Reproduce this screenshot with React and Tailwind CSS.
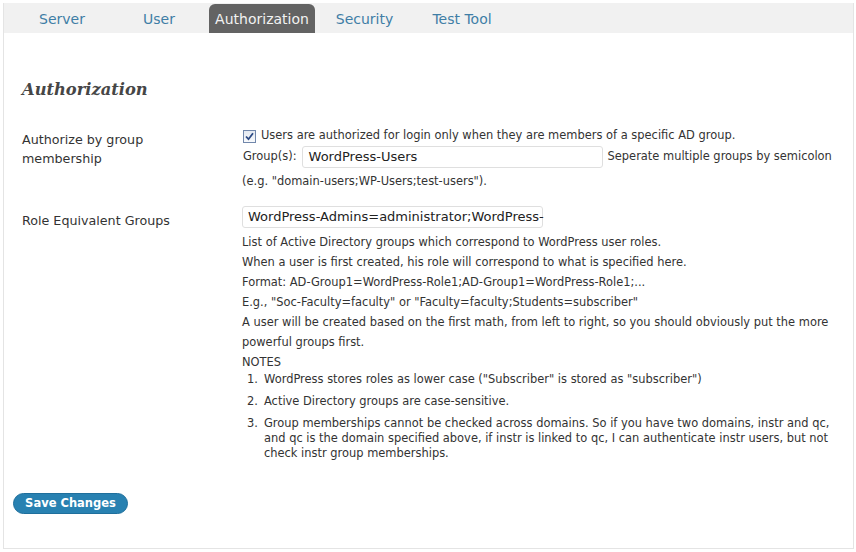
export default function App() {
  const notes = [
    <>WordPress stores roles as lower case ("Subscriber" is stored as "subscriber")</>,
    <>Active Directory groups are case-sensitive.</>,
    <>
      Group memberships cannot be checked across domains. So if you have two domains, instr and qc,
      <br />
      and qc is the domain specified above, if instr is linked to qc, I can authenticate instr users, but not
      <br />
      check instr group memberships.
    </>,
  ];
  return (
    <div className="w-[856px] h-[552px] bg-white pt-[3px] pl-[3px] font-['DejaVu_Sans',sans-serif] text-[#333]">
      <div className="w-[851px] h-[546px] border-l border-r border-b border-[#e4e4e4] flex flex-col">
        {/* Tabs */}
        <div className="h-[30px] bg-[#f1f1f1] flex items-end text-[14px] text-[#3f7ea6] whitespace-nowrap">
          <div className="ml-[29px] w-[58px] h-[29px] pt-[2px] flex items-center justify-center">Server</div>
          <div className="ml-[46px] w-[44px] h-[29px] pt-[2px] flex items-center justify-center">User</div>
          <div className="ml-[28px] w-[106px] h-[29px] pt-[2px] flex items-center justify-center bg-[#636363] text-[#f2f2f2] rounded-t-[6px]">
            Authorization
          </div>
          <div className="ml-[15px] w-[69px] h-[29px] pt-[2px] flex items-center justify-center">Security</div>
          <div className="ml-[24px] w-[78px] h-[29px] pt-[2px] flex items-center justify-center">Test Tool</div>
        </div>

        {/* Heading */}
        <h2 className="mt-[47px] ml-[18px] h-[20px] leading-[20px] font-['DejaVu_Serif',serif] italic font-bold text-[16.3px] text-[#464646]">
          Authorization
        </h2>

        {/* Row 1 */}
        <div className="mt-[25px] ml-[18px] flex items-start">
          <div className="w-[220px] mt-[5px] text-[12.7px] leading-[19px] pr-[40px]">
            Authorize by group membership
          </div>
          <div className="flex flex-col text-[11.45px] whitespace-nowrap">
            <div className="mt-[1px] h-[20px] flex items-center">
              <span className="ml-[1px] w-[13px] h-[13px] border border-[#7187ab] bg-gradient-to-b from-[#e4e9f1] to-[#f8fafc] flex items-center justify-center">
                <svg width="9" height="9" viewBox="0 0 9 9">
                  <path d="M1 4.5 L3.5 7.2 L8 1.2" fill="none" stroke="#2c4a84" strokeWidth="1.8" />
                </svg>
              </span>
              <span className="ml-[5px]">
                Users are authorized for login only when they are members of a specific AD group.
              </span>
            </div>
            <div className="h-[22px] flex items-center">
              <span className="ml-[1px]">Group(s):</span>
              <div className="ml-[5px] w-[301px] h-[22px] border border-[#dfdfdf] rounded-[3px] bg-white flex items-center pl-[6px] text-[13px] text-[#222]">
                WordPress-Users
              </div>
              <span className="ml-[5px]">Seperate multiple groups by semicolon</span>
            </div>
            <div className="mt-[3px] leading-[20px]">(e.g. "domain-users;WP-Users;test-users").</div>
          </div>
        </div>

        {/* Row 2 */}
        <div className="mt-[15px] ml-[18px] flex items-start">
          <div className="w-[220px] mt-[5px] text-[12.7px] leading-[19px]">Role Equivalent Groups</div>
          <div className="flex flex-col text-[11.45px] whitespace-nowrap">
            <div className="w-[301px] h-[22px] border border-[#dfdfdf] rounded-[3px] bg-white flex items-center pl-[5px] text-[13px] text-[#222]">
              WordPress-Admins=administrator;WordPress-
            </div>
            <div className="mt-[4px] leading-[20px]">
              <div>List of Active Directory groups which correspond to WordPress user roles.</div>
              <div>When a user is first created, his role will correspond to what is specified here.</div>
              <div>Format: AD-Group1=WordPress-Role1;AD-Group1=WordPress-Role1;...</div>
              <div>E.g., "Soc-Faculty=faculty" or "Faculty=faculty;Students=subscriber"</div>
              <div>
                A user will be created based on the first math, from left to right, so you should obviously put the more
                <br />
                powerful groups first.
              </div>
              <div>NOTES</div>
            </div>
            <ol className="leading-[15px]">
              {notes.map((n, i) => (
                <li key={i} className="flex mb-[7px]">
                  <span className="w-[16px] text-right shrink-0">{i + 1}.</span>
                  <span className="ml-[6px]">{n}</span>
                </li>
              ))}
            </ol>
          </div>
        </div>

        {/* Button */}
        <div className="mt-[25px] ml-[9px]">
          <button className="h-[21px] w-[115px] rounded-full bg-[#2881b1] border border-[#1f6f9c] text-white font-bold text-[11.5px] flex items-center justify-center">
            Save Changes
          </button>
        </div>
      </div>
    </div>
  );
}
